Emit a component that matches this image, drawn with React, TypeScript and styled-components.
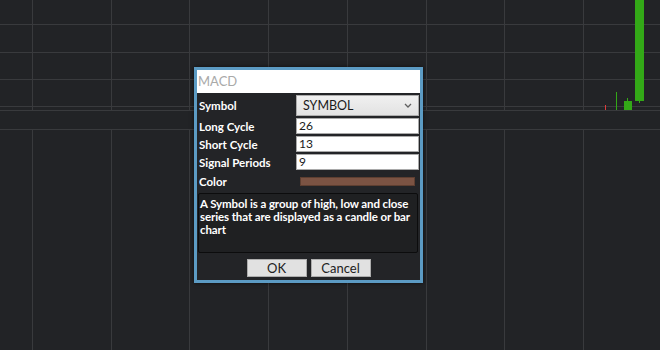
import React from "react"
import styled, { createGlobalStyle } from "styled-components"

const GlobalStyle = createGlobalStyle`
  html, body {
    margin: 0;
    padding: 0;
    background: #222326;
  }
  * {
    box-sizing: border-box;
  }
`

const GRID_X = [32, 111, 189, 268, 347, 426, 504, 583]
const GRID_Y = [24, 52, 79, 106]
const LINE = "#393a3d"
const UP = "#33a817"
const DOWN = "#e03c3c"

const Page = styled.div`
  position: relative;
  width: 660px;
  height: 350px;
  overflow: hidden;
  background: #222326;
  font-family: Lato, "Open Sans", sans-serif;
`

const Chart = styled.div`
  display: flex;
  flex-direction: column;
  height: 100%;
`

const Pane = styled.div<{ $h?: number }>`
  height: ${(p) => (p.$h ? p.$h + "px" : "auto")};
  flex: ${(p) => (p.$h ? "none" : "1")};
  border-bottom: 1px solid ${LINE};
  svg {
    display: block;
  }
`

const AxisBand = styled.div`
  height: 19px;
  flex: none;
  background: #222326;
  border-bottom: 1px solid ${LINE};
`

const Dialog = styled.div`
  position: absolute;
  left: 194px;
  top: 67px;
  width: 229px;
  height: 216px;
  border: 3px solid #5c9bc4;
  background: #232427;
  box-shadow: 0 0 4px rgba(0, 0, 0, 0.6);
  display: flex;
  flex-direction: column;
`

const Title = styled.div`
  height: 23px;
  background: #ffffff;
  color: #a9a9a9;
  font-size: 13px;
  line-height: 23px;
  padding-left: 1px;
`

const Body = styled.div`
  display: flex;
  flex-direction: column;
  padding: 2px 1px 0 1px;
  gap: 2px;
`

const Row = styled.div<{ $h: number }>`
  display: grid;
  grid-template-columns: 98px 1fr;
  align-items: center;
  height: ${(p) => p.$h}px;
`

const Label = styled.span`
  color: #ffffff;
  font-size: 11.5px;
  font-weight: 700;
  padding-left: 1px;
  white-space: nowrap;
`

const Select = styled.div`
  height: 21px;
  border: 1px solid #acacac;
  background: linear-gradient(#f0f0f0, #e2e2e2);
  color: #1a1a1a;
  font-size: 12.5px;
  display: flex;
  align-items: center;
  justify-content: space-between;
  padding: 0 6px 0 6px;
`

const Input = styled.div`
  height: 16px;
  border: 1px solid #a9a9a9;
  background: #ffffff;
  color: #1a1a1a;
  font-size: 12px;
  line-height: 14px;
  padding-left: 2px;
`

const Swatch = styled.div<{ $color: string }>`
  height: 9px;
  margin: 0 4px 0 4px;
  background: ${(p) => p.$color};
  border: 1px solid #5e3f31;
`

const Description = styled.div`
  margin: 1px 1px 0 0;
  height: 60px;
  border: 1px solid #0c0c0d;
  border-radius: 2px;
  background: #1f2022;
  color: #ffffff;
  font-size: 11.5px;
  font-weight: 700;
  letter-spacing: -0.1px;
  line-height: 13px;
  padding: 3px 0 0 1px;
`

const Buttons = styled.div`
  display: flex;
  justify-content: center;
  gap: 4px;
  margin-top: 4px;
`

const Button = styled.div`
  width: 60px;
  height: 18px;
  border: 1px solid #adadad;
  background: #e1e1e1;
  color: #222;
  font-size: 13px;
  display: flex;
  align-items: center;
  justify-content: center;
`

const Chevron = () => (
  <svg width="8" height="5" viewBox="0 0 8 5">
    <path d="M1 1 L4 4 L7 1" fill="none" stroke="#606060" strokeWidth="1.3" />
  </svg>
)

const TopPane = () => (
  <svg width="660" height="110">
    {GRID_Y.map((y) => (
      <rect key={"h" + y} x={0} y={y} width={660} height={1} fill={LINE} />
    ))}
    {GRID_X.map((x) => (
      <rect key={"v" + x} x={x} y={0} width={1} height={110} fill={LINE} />
    ))}
    <rect x={605} y={105} width={1} height={5} fill={DOWN} />
    <rect x={616} y={92} width={1} height={18} fill={UP} />
    <rect x={627} y={98} width={1} height={4} fill={UP} />
    <rect x={624} y={101} width={8} height={9} fill={UP} />
    <rect x={635} y={0} width={9} height={101} fill={UP} />
    <rect x={639} y={101} width={1} height={2} fill={UP} />
  </svg>
)

const BottomPane = () => (
  <svg width="660" height="221">
    {GRID_X.map((x) => (
      <rect key={"b" + x} x={x} y={0} width={1} height={221} fill={LINE} />
    ))}
  </svg>
)

const fields = [
  { label: "Long Cycle", value: "26" },
  { label: "Short Cycle", value: "13" },
  { label: "Signal Periods", value: "9" },
]

export default function App() {
  return (
    <Page>
      <GlobalStyle />
      <Chart>
        <Pane $h={111}>
          <TopPane />
        </Pane>
        <AxisBand />
        <Pane>
          <BottomPane />
        </Pane>
      </Chart>

      <Dialog>
        <Title>MACD</Title>
        <Body>
          <Row $h={21}>
            <Label>Symbol</Label>
            <Select>
              <span>SYMBOL</span>
              <Chevron />
            </Select>
          </Row>
          {fields.map((f) => (
            <Row $h={16} key={f.label}>
              <Label>{f.label}</Label>
              <Input>{f.value}</Input>
            </Row>
          ))}
          <Row $h={18}>
            <Label>Color</Label>
            <Swatch $color="#7b5343" />
          </Row>
          <Description>
            A Symbol is a group of high, low and close series that are displayed as a candle or bar chart
          </Description>
          <Buttons>
            <Button>OK</Button>
            <Button>Cancel</Button>
          </Buttons>
        </Body>
      </Dialog>
    </Page>
  )
}
